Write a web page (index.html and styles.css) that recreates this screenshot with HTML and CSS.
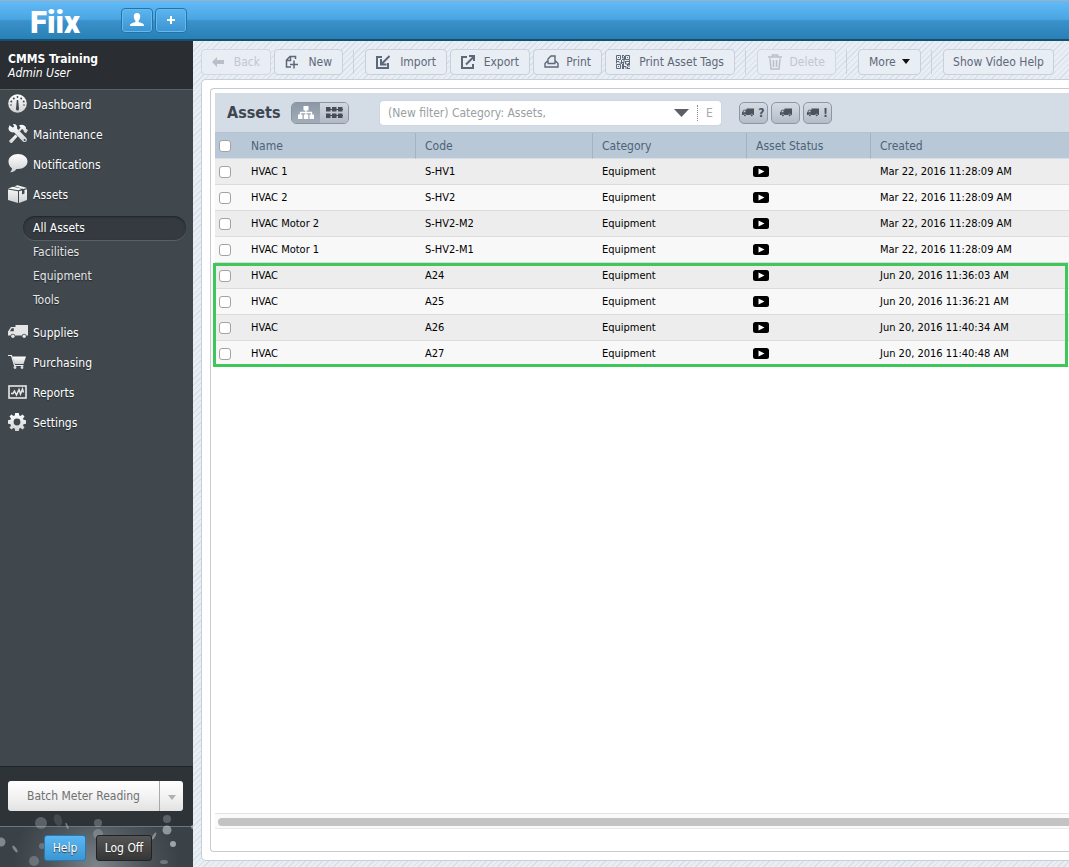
FILE: index.html
```html
<!DOCTYPE html>
<html lang="en">
<head>
<meta charset="utf-8">
<title>Fiix - Assets</title>
<link rel="stylesheet" href="styles.css">
</head>
<body>
<svg class="defs" aria-hidden="true">
  <defs>
    <linearGradient id="silver" x1="0" y1="0" x2="0" y2="1"><stop offset="0" stop-color="#fff"/><stop offset="1" stop-color="#cfd1d2"/></linearGradient>
    <symbol id="truck" viewBox="0 0 20 13"><path d="M7.500 0H20v10.500h-1.600a2.300 2.300 0 0 0-4.500 0H7.100a2.300 2.300 0 0 0-4.500 0H0V6.500L3 2h4.500zM5.800 3.300H3.700L2 6.200h3.800z" fill-rule="evenodd"/><circle cx="4.900" cy="11.200" r="1.700"/><circle cx="16.200" cy="11.200" r="1.700"/></symbol>
    <symbol id="play" viewBox="0 0 16 11"><rect width="16" height="11" rx="2.500"/><path d="M5.500 2.500l6 3-6 3z" fill="#fff"/></symbol>
  </defs>
</svg>
<header class="topbar">
  <a class="logo" href="#">Fiix</a>
  <button class="top-btn" aria-label="Profile"><svg width="14" height="14" viewBox="0 0 14 14"><path d="M7 0c2.200 0 3.400 1.500 3.200 3.700C10 6 9.300 7 8.600 7.700v1.200c1.500.8 5.400 1.100 5.400 3.500V13H0v-.600c0-2.400 3.900-2.700 5.400-3.500V7.700C4.700 7 4 6 3.800 3.700 3.600 1.500 4.800 0 7 0z" fill="#fff"/></svg></button>
  <button class="top-btn" aria-label="Add"><svg width="8" height="8" viewBox="0 0 8 8"><path d="M4 0v8M0 4h8" stroke="#fff" stroke-width="2"/></svg></button>
</header>
<div class="layout">
  <aside class="sidebar">
    <div class="user"><strong>CMMS Training</strong><em>Admin User</em></div>
    <nav class="nav">
      <a class="nav-item" href="#"><svg width="19" height="19" viewBox="0 0 19 19"><circle cx="9.500" cy="9.500" r="9.300" fill="url(#silver)"/><path d="M8.800 6h1.400l.8 9a1.500 1.500 0 0 1-3 0z" fill="#40474d"/><g fill="#40474d"><circle cx="9.500" cy="3" r=".9"/><circle cx="5.800" cy="4.500" r="1"/><circle cx="13.200" cy="4.500" r="1"/><circle cx="3.300" cy="7.500" r="1"/><circle cx="15.700" cy="7.500" r="1"/><circle cx="3" cy="11" r=".8"/><circle cx="16" cy="11" r=".8"/></g></svg>Dashboard</a>
      <a class="nav-item" href="#"><svg width="20" height="20" viewBox="0 0 20 20" fill="url(#silver)"><path d="M1.500 1.300l3 2.300 1.800-.8L5 0c2.800-.2 4.600 1.700 4 4.500l9.300 9.500c1.800 2.500-1 5.300-3.500 3.500L6 8.200C3 9 .300 7 .500 4.300z"/><path d="M11 1.500c2.500-1.300 5-.5 6.800 1.500l.3 2 1.900 1-2 3.200-2-1.200-.5-1.700L14 5l-2.700 3.300-1.500-1.500 2.700-3.300z"/><path d="M7.500 10.500l2 2-5.300 6.200c-1.500 1.200-3.700-.9-2.500-2.500z"/><circle cx="16.600" cy="16" r="1" fill="#40474d"/></svg>Maintenance</a>
      <a class="nav-item" href="#"><svg width="20" height="19" viewBox="0 0 20 19"><path d="M10 0c5.400 0 9.500 3.300 9.500 7.500S15.400 15 10 15H8.500C7.200 17 5 18.400 2 18.200c1.200-1 1.900-2.400 2-4C1.600 12.900.500 10 .500 7.500.500 3.300 4.600 0 10 0z" fill="url(#silver)"/></svg>Notifications</a>
      <a class="nav-item" href="#"><svg width="20" height="18" viewBox="0 0 20 18" fill="url(#silver)"><path d="M0 4.500l10 1.800V18L0 15zM11 6.300l3-.7v4l2.500-1V5L19 4.300V15l-8 3zM0 3.500L5 1.700l9 2-3.500 1.600zM6.500 1.300L9.500.200 19 2.900 15.500 4z"/></svg>Assets</a>
      <div class="subnav">
        <a class="sub-item active" href="#">All Assets</a>
        <a class="sub-item" href="#">Facilities</a>
        <a class="sub-item" href="#">Equipment</a>
        <a class="sub-item" href="#">Tools</a>
      </div>
      <a class="nav-item" href="#"><svg width="20" height="13" fill="#e4e5e6"><use href="#truck"/></svg>Supplies</a>
      <a class="nav-item" href="#"><svg width="18" height="14" viewBox="0 0 18 14"><path d="M0 .500h3.500L6.500 10.500h9" fill="none" stroke="#eee" stroke-width="1.200"/><path d="M4.200 1.500H18L15.500 9H6.700z" fill="url(#silver)"/><circle cx="7" cy="12.500" r="1.400" fill="#ddd"/><circle cx="14" cy="12.500" r="1.400" fill="#ddd"/></svg>Purchasing</a>
      <a class="nav-item" href="#"><svg width="19" height="14" viewBox="0 0 19 14" fill="none" stroke="#e6e6e6"><rect x="1" y="1" width="17" height="12" stroke-width="1.600"/><path d="M3 8.500h2L6.500 6l2 4L11 4.500l1.500 4.500 2-5 1 3.500" stroke-width="1.500"/></svg>Reports</a>
      <a class="nav-item" href="#"><svg width="18" height="18" viewBox="0 0 18 18"><path fill="url(#silver)" fill-rule="evenodd" d="M7.200 0h3.600l.5 2.500 1.200.5L14.600 1.500l1.900 1.900L15 5.500l.5 1.200 2.500.5v3.600l-2.500.5-.5 1.200 1.500 2.100-1.900 1.900-2.100-1.500-1.200.5-.5 2.500H7.200l-.5-2.500L5.500 15l-2.100 1.500-1.900-1.900L3 12.500l-.5-1.200L0 10.800V7.200l2.500-.5L3 5.500 1.500 3.400l1.900-1.900L5.500 3l1.200-.5zM9 5.600a3.400 3.400 0 1 0 0 6.800 3.400 3.400 0 0 0 0-6.800z"/></svg>Settings</a>
    </nav>
    <div class="quick">
      <button class="quick-main">Batch Meter Reading</button><button class="quick-more" aria-label="More actions"><svg width="8" height="5"><path d="M0 0h8L4 5z" fill="#b0b0b0"/></svg></button>
    </div>
    <div class="session">
      <button class="btn-help">Help</button><button class="btn-logoff">Log Off</button>
    </div>
    <svg class="bokeh" viewBox="0 0 193 56" preserveAspectRatio="xMidYMax slice" aria-hidden="true"><g fill="#c5ced4"><ellipse cx="41" cy="12" rx="6" ry="6" opacity=".3"/><ellipse cx="58" cy="9" rx="4" ry="6" opacity=".15" transform="rotate(-20 58 9)"/><circle cx="98" cy="12" r="4" opacity=".3"/><circle cx="98" cy="23" r="5" opacity=".3"/><circle cx="167" cy="8" r="4" opacity=".3"/><circle cx="167" cy="19" r="4.500" opacity=".6"/><circle cx="173" cy="33" r="3" opacity=".7"/><circle cx="1" cy="31" r="4.500" opacity=".5"/><ellipse cx="15" cy="38" rx="1.500" ry="4" opacity=".5" transform="rotate(-35 15 38)"/><ellipse cx="67" cy="15" rx="1" ry="3.500" opacity=".45" transform="rotate(-20 67 15)"/><ellipse cx="154" cy="25" rx="1.300" ry="4" opacity=".5" transform="rotate(30 154 25)"/><circle cx="34" cy="50" r="5" opacity=".3"/><circle cx="42" cy="35" r="3" opacity=".3"/><ellipse cx="164" cy="51" rx="4" ry="2" opacity=".35"/><circle cx="193" cy="16" r="2" opacity=".6"/></g></svg>
  </aside>
  <main class="main">
    <div class="toolbar">
      <button class="tool w-back" disabled><svg width="12" height="10" viewBox="0 0 12 10"><path d="M0 5l5-5v3h7v4H5v3z" fill="#b9bfc8"/></svg><span>Back</span></button>
      <button class="tool w-new"><svg width="14" height="14" viewBox="0 0 14 14" fill="none" stroke="#5d6879" stroke-width="1.500"><path d="M6 12H1.500V5L5 1.500h5.500V4M5.500 2v3.500H2M9 5.500v8M5 9.500h8"/></svg><span>New</span></button>
      <i class="sep"></i>
      <button class="tool w-import"><svg width="14" height="14" viewBox="0 0 14 14" fill="none" stroke="#5d6879" stroke-width="2"><path d="M6 2H1v11h11V8M13.500 1L6 8.500M5 4v5.500h5.500"/></svg><span>Import</span></button>
      <button class="tool w-export"><svg width="14" height="14" viewBox="0 0 14 14" fill="none" stroke="#5d6879" stroke-width="2"><path d="M6 2H1v11h11V9M5 9.500L12.500 2M8 1h5v5"/></svg><span>Export</span></button>
      <button class="tool w-print"><svg width="15" height="13" viewBox="0 0 15 13" fill="none" stroke="#5d6879" stroke-width="1.400"><path d="M4 8V4l3-3h4v7M4 6.500H3l-2 2V12h13V8.500l-2-2h-1M3.500 8.500h8"/></svg><span>Print</span></button>
      <button class="tool w-tags"><svg width="14" height="14" viewBox="0 0 14 14" fill="none" stroke="#5d6879"><path d="M.500.500h4v4h-4zM9.500.500h4v4h-4zM.500 9.500h4v4h-4zM2 2.500h1M11 2.500h1M2 11.500h1M6.500 0v3h2M7.500 0v1M6 4.500h2v3H5M0 6.500h3v1M10 6.500h4M9.500 6v3h2v2h2.500M6.500 9v5M8 11.500h2V14M12 13.500h2M12.500 8v2M3.500 8h3M.500 5v3.500M13.500 5v5M8.500 1v4M5.500 5v4M7.500 8v6M11.500 12v2"/></svg><span>Print Asset Tags</span></button>
      <i class="sep"></i>
      <button class="tool w-delete" disabled><svg width="14" height="16" viewBox="0 0 14 16" fill="none" stroke="#b9bfc8" stroke-width="1.500"><path d="M0 3h14M4.500 2.500V1h5v1.500M2 4.500L3 15h8l1-10.500M5.500 6v7M8.500 6v7"/></svg><span>Delete</span></button>
      <i class="sep"></i>
      <button class="tool w-more"><span>More</span><svg width="8" height="5"><path d="M0 0h8L4 5z" fill="#111"/></svg></button>
      <i class="sep"></i>
      <button class="tool w-video"><span>Show Video Help</span></button>
    </div>
    <section class="panel">
      <div class="card">
        <div class="titlebar">
          <h1>Assets</h1>
          <div class="views">
            <button class="view on" aria-label="Tree view"><svg width="16" height="13" viewBox="0 0 16 13"><path d="M8 4v5M2.500 9V6.500h11V9" fill="none" stroke="#fff" stroke-width="1.300"/><path d="M5.500 0h5v4.500h-5zM0 8.500h4.500V13H0zM5.800 8.500h4.500V13H5.800zM11.500 8.500H16V13h-4.500z" fill="#fff"/></svg></button><button class="view" aria-label="Flat view"><svg width="17" height="11" viewBox="0 0 17 11"><path d="M0 2.500h17M0 8.500h17" stroke="#464d58"/><path d="M0 0h4.500v4.500H0zM6 0h4.500v4.500H6zM12 0h4.500v4.500H12zM0 6.500h4.500V11H0zM6 6.500h4.500V11H6zM12 6.500h4.500V11H12z" fill="#464d58"/></svg></button>
          </div>
          <div class="filter">
            <input type="text" aria-label="Filter" value="(New filter) Category: Assets,">
            <button class="filter-drop" aria-label="Choose filter"><svg width="15" height="8"><path d="M0 0h15L7.500 8z" fill="#5c6066"/></svg></button>
            <button class="filter-edit">E</button>
          </div>
          <div class="states">
            <button class="state" aria-label="Unknown status"><svg width="12" height="9"><use href="#truck"/></svg>?</button>
            <button class="state" aria-label="Online"><svg width="12" height="9"><use href="#truck"/></svg></button>
            <button class="state" aria-label="Offline"><svg width="12" height="9"><use href="#truck"/></svg>!</button>
          </div>
        </div>
        <div class="grid">
          <table>
            <colgroup><col class="c-check"><col class="c-name"><col class="c-code"><col class="c-cat"><col class="c-status"><col></colgroup>
            <thead><tr><th><input type="checkbox" aria-label="Select all"></th><th>Name</th><th>Code</th><th>Category</th><th>Asset Status</th><th>Created</th></tr></thead>
            <tbody>
              <tr><td><input type="checkbox" aria-label="Select HVAC 1"></td><td>HVAC 1</td><td>S-HV1</td><td>Equipment</td><td><svg class="play"><use href="#play"/></svg></td><td>Mar 22, 2016 11:28:09 AM</td></tr>
              <tr><td><input type="checkbox" aria-label="Select HVAC 2"></td><td>HVAC 2</td><td>S-HV2</td><td>Equipment</td><td><svg class="play"><use href="#play"/></svg></td><td>Mar 22, 2016 11:28:09 AM</td></tr>
              <tr><td><input type="checkbox" aria-label="Select HVAC Motor 2"></td><td>HVAC Motor 2</td><td>S-HV2-M2</td><td>Equipment</td><td><svg class="play"><use href="#play"/></svg></td><td>Mar 22, 2016 11:28:09 AM</td></tr>
              <tr><td><input type="checkbox" aria-label="Select HVAC Motor 1"></td><td>HVAC Motor 1</td><td>S-HV2-M1</td><td>Equipment</td><td><svg class="play"><use href="#play"/></svg></td><td>Mar 22, 2016 11:28:09 AM</td></tr>
              <tr><td><input type="checkbox" aria-label="Select A24"></td><td>HVAC</td><td>A24</td><td>Equipment</td><td><svg class="play"><use href="#play"/></svg></td><td>Jun 20, 2016 11:36:03 AM</td></tr>
              <tr><td><input type="checkbox" aria-label="Select A25"></td><td>HVAC</td><td>A25</td><td>Equipment</td><td><svg class="play"><use href="#play"/></svg></td><td>Jun 20, 2016 11:36:21 AM</td></tr>
              <tr><td><input type="checkbox" aria-label="Select A26"></td><td>HVAC</td><td>A26</td><td>Equipment</td><td><svg class="play"><use href="#play"/></svg></td><td>Jun 20, 2016 11:40:34 AM</td></tr>
              <tr><td><input type="checkbox" aria-label="Select A27"></td><td>HVAC</td><td>A27</td><td>Equipment</td><td><svg class="play"><use href="#play"/></svg></td><td>Jun 20, 2016 11:40:48 AM</td></tr>
            </tbody>
          </table>
          <div class="highlight"></div>
        </div>
        <div class="scroll"><div class="thumb"></div></div>
      </div>
    </section>
  </main>
</div>
</body>
</html>
```
FILE: styles.css
```css
* { box-sizing: border-box; }
body {
  margin: 0;
  height: 100vh;
  display: flex;
  flex-direction: column;
  overflow: hidden;
  font: 12px/16px "DejaVu Sans Condensed", "Noto Sans", sans-serif;
  color: #000;
}
button, input { font: inherit; margin: 0; padding: 0; }
button { cursor: pointer; white-space: nowrap; }
a { text-decoration: none; color: inherit; }
svg { flex: none; }
.defs { position: absolute; width: 0; height: 0; }

.topbar {
  height: 41px;
  flex: none;
  display: flex;
  align-items: center;
  gap: 2px;
  border-top: 1px solid #9db0bd;
  border-bottom: 2px solid #14506f;
  background: linear-gradient(#62bbf8, #4aa5e3 48%, #3b92cb 52%, #2980b6);
}
.logo {
  width: 89px;
  margin-left: 30px;
  padding-top: 6px;
  font: 900 31px/32px Roboto, sans-serif;
  color: #fff;
}
.top-btn {
  width: 32px;
  height: 25px;
  display: flex;
  align-items: center;
  justify-content: center;
  border: 1px solid #2275ab;
  border-radius: 4px;
  background: linear-gradient(#5db5f0, #3b93cf);
  box-shadow: inset 0 0 0 1px #67b9ee;
}

.layout { flex: 1; display: flex; min-height: 0; }

.sidebar {
  position: relative;
  width: 193px;
  flex: none;
  display: flex;
  flex-direction: column;
  background: #40474d;
  color: #fff;
  text-shadow: 0 1px 1px #22272b;
}
.user {
  height: 49px;
  padding: 11px 8px 0;
  line-height: 14px;
  background: #2a2e32;
  border-bottom: 1px solid #5b6165;
}
.user strong, .user em { display: block; }
.nav { flex: 1; }
.nav-item {
  display: grid;
  grid-template-columns: 25px 1fr;
  align-items: center;
  height: 30px;
  padding-left: 8px;
}
.nav-item svg { margin-bottom: 3px; }
.subnav { padding: 6px 7px 6px 23px; height: 108px; }
.sub-item {
  display: block;
  height: 24px;
  padding-left: 10px;
  line-height: 24px;
  color: #e4e6e7;
}
.sub-item.active {
  border-radius: 12px;
  background: #343a40;
  box-shadow: inset 0 1px 2px #202428, 0 1px 0 #596066;
  color: #fff;
}
.quick {
  height: 61px;
  padding: 14px 10px 15px 8px;
  display: flex;
  border-top: 1px solid #202428;
  border-bottom: 1px solid #70777c;
  background: #2e3337;
}
.quick button {
  border: 0;
  background: linear-gradient(#fff, #f3f3f3 50%, #e2e2e2);
  color: #707070;
  z-index: 1;
}
.quick .quick-main { flex: 1; border-radius: 3px 0 0 3px; border-right: 1px solid #a9a9a9; }
.quick .quick-more { width: 23px; border-radius: 0 3px 3px 0; }
.session {
  height: 40px;
  padding: 8px 0 6px 44px;
  display: flex;
  gap: 10px;
  background: radial-gradient(circle at 50% 100%, #7c858b, #4d565c 45%, #3a4147 80%);
}
.session button { color: #fff; border-radius: 3px; z-index: 1; text-shadow: 0 1px 1px #333; }
.btn-help { width: 42px; border: 1px solid #2b78ae; background: linear-gradient(#5ab7f3, #3a97d4); }
.btn-logoff { width: 56px; border: 1px solid #222; background: linear-gradient(#555, #363636); }
.bokeh { position: absolute; left: 0; bottom: 0; width: 193px; height: 56px; pointer-events: none; }

.main {
  flex: 1;
  min-width: 0;
  display: flex;
  flex-direction: column;
  padding: 7px 0 6px 8px;
  background: repeating-linear-gradient(135deg, #e8eef4 0 3px, #d6e0e9 3px 4px);
}
.toolbar { display: flex; align-items: center; gap: 3px; height: 27px; margin-bottom: 4px; }
.tool {
  flex: none;
  height: 26px;
  display: flex;
  align-items: center;
  justify-content: space-between;
  padding: 0 10px;
  border: 1px solid #c9cfdb;
  border-radius: 4px;
  background: #e9edf4;
  color: #5d6879;
}
.tool:disabled { color: #c3c8d0; border-color: #d2d8e2; }
.w-back { width: 70px; }
.w-new { width: 69px; }
.w-import { width: 82px; }
.w-export { width: 80px; }
.w-print { width: 69px; }
.w-tags { width: 130px; }
.w-delete { width: 79px; }
.w-more { width: 63px; }
.w-video { width: 111px; justify-content: center; }
.sep { width: 1px; height: 24px; margin: 0 8px 0 7px; background: #c9d1dc; }

.panel {
  flex: 1;
  min-height: 0;
  display: flex;
  padding: 8px 0 8px 8px;
  border: 1px solid #c9cfd6;
  border-right: 0;
  border-radius: 5px 0 0 5px;
  background: #fff;
}
.card {
  flex: 1;
  min-width: 0;
  display: flex;
  flex-direction: column;
  padding: 4px 0 22px 4px;
  border: 1px solid #c9cbd2;
  border-right: 0;
  border-radius: 4px 0 0 4px;
}
.titlebar {
  height: 40px;
  flex: none;
  display: flex;
  align-items: center;
  padding-left: 12px;
  background: #d4dce6;
  border-bottom: 1px solid #b4c3d2;
}
.titlebar h1 { width: 64px; margin: 0; font-size: 16px; line-height: 20px; color: #3f4550; }
.views { display: flex; width: 58px; height: 22px; border: 1px solid #8a94a1; border-radius: 5px; overflow: hidden; }
.view { flex: 1; display: flex; align-items: center; justify-content: center; border: 0; background: linear-gradient(#d3d8df, #b1bac6); }
.view.on { background: linear-gradient(#8c98a6, #a2adb9); }
.filter {
  width: 341px;
  height: 24px;
  margin-left: 31px;
  display: flex;
  align-items: center;
  padding-left: 8px;
  border-radius: 3px;
  background: #fff;
  box-shadow: 0 0 1px #9aa7b5;
}
.filter input { flex: 1; min-width: 0; border: 0; outline: 0; background: none; color: #9a9ea3; }
.filter button { border: 0; background: none; color: #a6a9ad; }
.filter-drop { width: 32px; height: 15px; display: flex; align-items: center; justify-content: center; }
.filter .filter-edit { width: 24px; border-left: 1px dotted #888; }
.states { display: flex; gap: 3px; margin-left: 18px; }
.state {
  width: 29px;
  height: 22px;
  display: flex;
  align-items: center;
  justify-content: center;
  gap: 4px;
  border: 1px solid #8d97a4;
  border-radius: 5px;
  background: linear-gradient(#d6dbe2, #b3bcc8);
  color: #4b5260;
  fill: #4b5260;
  font-weight: bold;
}

.grid { position: relative; flex: 1; min-height: 0; }
table { width: 100%; table-layout: fixed; border-collapse: separate; border-spacing: 0; }
.c-check { width: 27px; }
.c-name { width: 174px; }
.c-code { width: 177px; }
.c-cat { width: 154px; }
.c-status { width: 124px; }
th {
  height: 26px;
  padding: 0 0 0 9px;
  text-align: left;
  font-weight: normal;
  color: #4c6377;
  background: #b9c8d7;
  border-bottom: 1px solid #d9dfe6;
  border-right: 1px solid #a3b3c4;
}
th:first-child, th:last-child { border-right: 0; }
td { height: 26px; padding: 0 0 0 9px; font-size: 11px; line-height: 18px; background: #f8f8f8; border-bottom: 1px solid #dcdcdc; }
tr:nth-child(odd) td { background: #ededed; }
th:first-child, td:first-child { padding-left: 4px; }
td:nth-child(5) { padding-left: 6px; }
input[type="checkbox"] {
  appearance: none;
  display: block;
  width: 12px;
  height: 12px;
  border: 1px solid #a3a3a3;
  border-radius: 3px;
  background: #fff;
}
.play { display: block; width: 16px; height: 11px; }
.highlight { position: absolute; top: 130px; left: -2px; right: 1px; height: 104px; border: 3px solid #3fc75b; pointer-events: none; }
.scroll { height: 16px; padding: 4px 0 3px 3px; border-top: 1px solid #e4e4e4; border-bottom: 1px solid #e8e8e8; background: #fafafa; }
.thumb { height: 8px; border-radius: 4px 0 0 4px; background: #c3c3c3; }
```
